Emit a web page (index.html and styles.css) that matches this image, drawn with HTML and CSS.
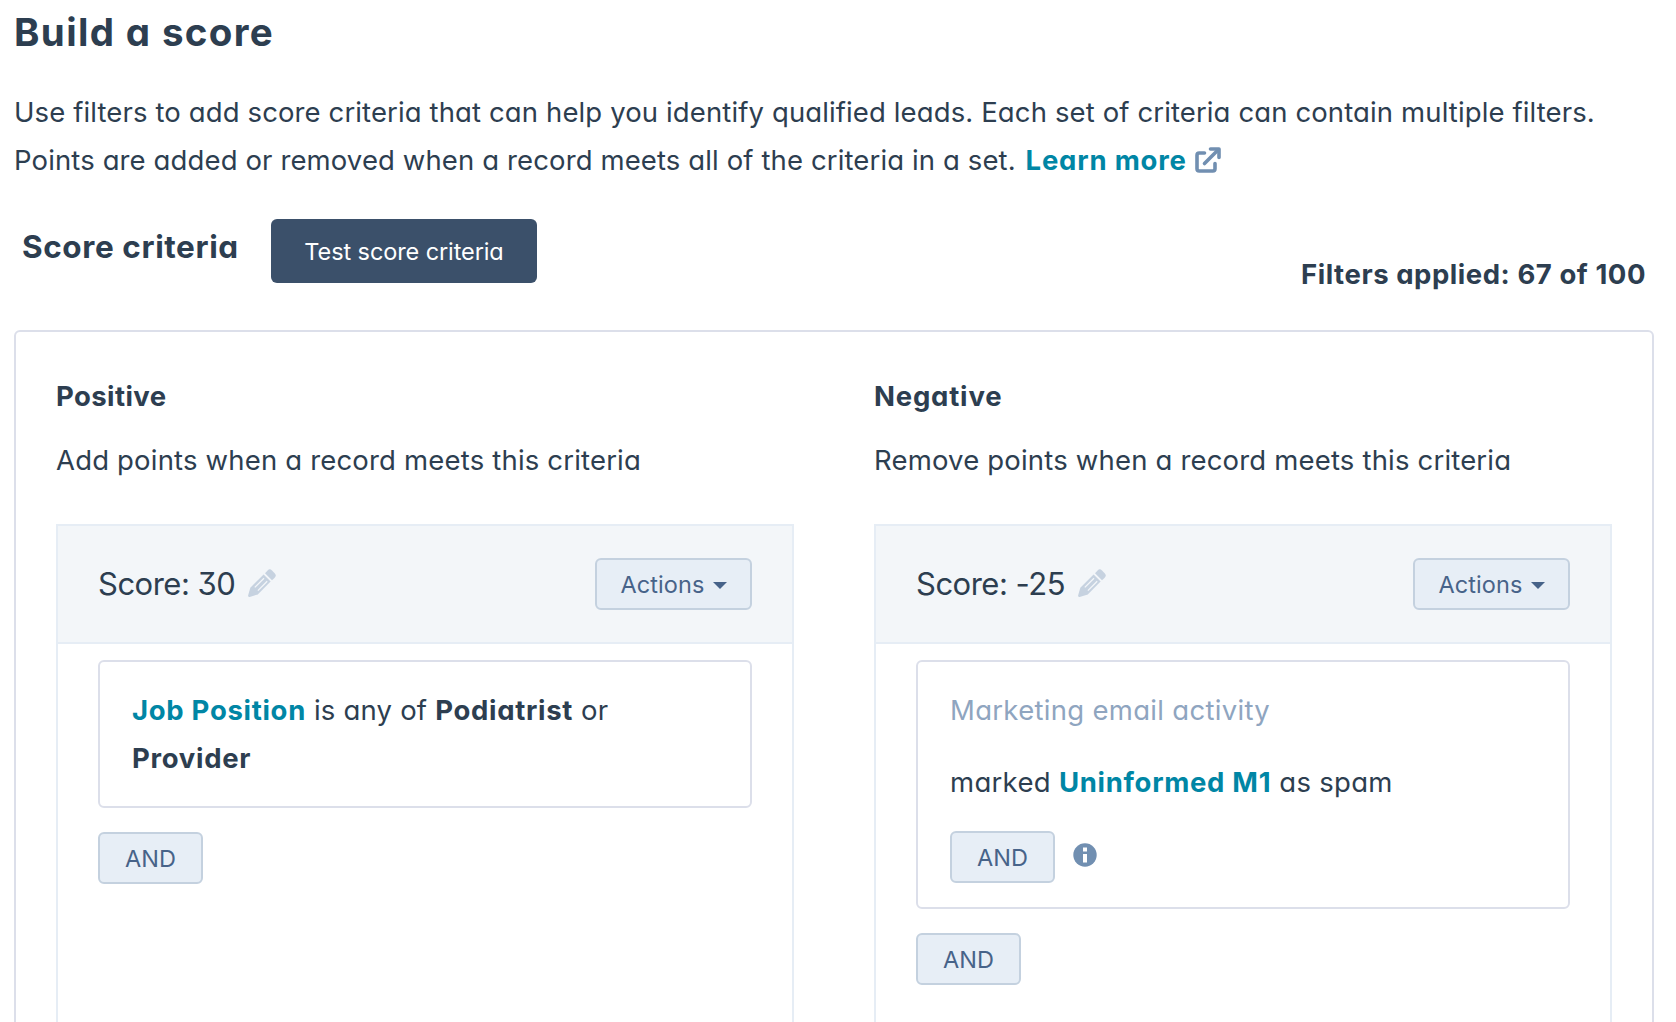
FILE: index.html
```
<!DOCTYPE html>
<html lang="en">
<head>
<meta charset="utf-8">
<title>Build a score</title>
<link rel="stylesheet" href="styles.css">
</head>
<body>
<svg class="symbols" aria-hidden="true">
  <symbol id="pencil" viewBox="0 0 28 28">
    <path d="M17 4.200 19.600 1.400Q21.700-.8 24 1.400L26.700 4.200Q28.800 6.500 26.700 8.700L24 11.300Z"/>
    <path d="M15.600 5.500 22.600 12.500 9.800 25.500 1.600 27.900Q-.2 28.200.1 26.400L2.300 18.800Z"/>
    <path class="groove" d="M6.800 18.400 16 9.200M9.900 21.600 19.200 12.300"/>
  </symbol>
</svg>
<main class="page">
  <h1 class="title">Build a score</h1>
  <p class="intro">Use filters to add score criteria that can help you identify qualified leads. Each set of criteria can contain multiple filters.<br>Points are added or removed when a record meets all of the criteria in a set. <a class="link learn">Learn more</a><svg class="external" viewBox="0 0 26 26"><path d="M9.500 6H4.200Q2 6 2 8.200V21.800Q2 24 4.200 24H17.800Q20 24 20 21.800V16.500M9.500 16.500 22.500 3.500"/><path d="M15.500 2H24V10.500"/></svg></p>

  <div class="toolbar">
    <h2 class="subtitle">Score criteria</h2>
    <button class="primary">Test score criteria</button>
    <strong class="count">Filters applied: 67 of 100</strong>
  </div>

  <section class="panel">
    <div class="column">
      <h3 class="heading">Positive</h3>
      <p class="hint">Add points when a record meets this criteria</p>
      <div class="set">
        <header class="set-head">
          <span class="score">Score: 30</span>
          <svg class="pencil"><use href="#pencil"/></svg>
          <button class="btn actions">Actions<i class="caret"></i></button>
        </header>
        <div class="set-body">
          <div class="filter"><p><b class="link">Job Position</b> is any of <b>Podiatrist</b> or<br><b>Provider</b></p></div>
          <button class="btn">AND</button>
        </div>
      </div>
    </div>
    <div class="column">
      <h3 class="heading negative">Negative</h3>
      <p class="hint">Remove points when a record meets this criteria</p>
      <div class="set">
        <header class="set-head">
          <span class="score">Score: -25</span>
          <svg class="pencil"><use href="#pencil"/></svg>
          <button class="btn actions">Actions<i class="caret"></i></button>
        </header>
        <div class="set-body">
          <div class="filter activity">
            <p class="kind">Marketing email activity</p>
            <p>marked <b class="link">Uninformed M1</b> as spam</p>
            <div class="nested">
              <button class="btn">AND</button>
              <svg class="info" viewBox="0 0 24 24"><circle cx="12" cy="12" r="11.700"/><path d="M10 4.500h4v4h-4zM10 11h4v8.500h-4z"/></svg>
            </div>
          </div>
          <button class="btn">AND</button>
        </div>
      </div>
    </div>
  </section>
</main>
</body>
</html>
```
FILE: styles.css
```
* { box-sizing: border-box; }

body {
  margin: 0;
  height: 1022px;
  overflow: hidden;
  background: #fff;
  color: #2d3e50;
  font-family: Inter, "Open Sans", sans-serif;
  font-size: 27.5px;
  font-weight: 400;
  font-feature-settings: "cv11", "cv09";
  line-height: 48px;
  letter-spacing: .12px;
}

h1, h2, h3, p { margin: 0; }
b, strong { font-weight: 700; letter-spacing: .7px; }
button { font: inherit; letter-spacing: inherit; }
.symbols { display: none; }

.page { padding: 8px 22px 0 14px; }
.title { font-size: 38.5px; font-weight: 700; letter-spacing: 1.35px; }
.intro { margin-top: 32px; white-space: nowrap; }
.link { color: #0086a5; }
.learn { margin-left: 2px; font-weight: 700; letter-spacing: .8px; }
.external {
  width: 26px;
  height: 26px;
  margin-left: 8px;
  vertical-align: -3px;
  fill: none;
  stroke: #718fb1;
  stroke-width: 3.6;
  stroke-linecap: round;
  stroke-linejoin: round;
}

.toolbar {
  display: flex;
  align-items: flex-start;
  height: 79px;
  margin-top: 35px;
  padding: 0 8px;
}
.subtitle {
  width: 249px;
  padding-top: 8px;
  font-size: 31.5px;
  font-weight: 700;
  line-height: 40px;
  letter-spacing: .6px;
}
.primary {
  width: 266px;
  height: 64px;
  padding: 2px 0 0;
  border: 0;
  border-radius: 6px;
  background: #3b506a;
  color: #fff;
  font-size: 23.5px;
  letter-spacing: -.1px;
}
.count { margin-left: auto; align-self: flex-end; letter-spacing: .55px; }

.panel {
  display: grid;
  grid-template-columns: 738px 738px;
  column-gap: 80px;
  height: 720px;
  margin-top: 32px;
  padding: 40px 40px 0;
  border: 2px solid #dcdfea;
  border-radius: 6px;
}
.column { display: flex; flex-direction: column; }
.heading { font-size: 27.5px; font-weight: 700; letter-spacing: .4px; }
.negative { letter-spacing: .8px; }
.hint { margin-top: 16px; letter-spacing: .18px; }
.set {
  flex: 1;
  margin-top: 40px;
  border: 2px solid #e6edf5;
}
.set-head {
  display: flex;
  align-items: center;
  height: 118px;
  padding: 0 40px;
  border-bottom: 2px solid #e6edf5;
  background: #f3f6f9;
}
.score { font-size: 31px; letter-spacing: -.5px; }
.pencil { width: 28px; height: 28px; margin: 0 0 2px 13px; fill: #c6d2e0; }
.groove { stroke: #f3f6f9; stroke-width: 1.3; fill: none; }

.btn {
  display: flex;
  align-items: center;
  justify-content: center;
  width: 105px;
  height: 52px;
  padding: 2px 0 0;
  border: 2px solid #c4d1df;
  border-radius: 6px;
  background: #e7eef6;
  color: #476389;
  font-size: 23.5px;
  letter-spacing: .1px;
}
.actions { width: 157px; margin-left: auto; }
.caret {
  margin: 0 0 0 8px;
  border: 7px solid transparent;
  border-top-color: currentColor;
  border-bottom: 0;
}

.set-body {
  display: flex;
  flex-direction: column;
  gap: 24px;
  padding: 16px 40px 0;
}
.filter {
  padding: 24px 32px;
  border: 2px solid #dcdfea;
  border-radius: 6px;
  letter-spacing: .2px;
}
.activity { letter-spacing: .3px; }
.kind { margin-bottom: 24px; color: #8fa5c0; }
.nested { display: flex; align-items: center; gap: 18px; margin-top: 25px; }
.info { width: 24px; height: 24px; margin-bottom: 4px; fill: #718fb1; }
.info path { fill: #fff; }
```
